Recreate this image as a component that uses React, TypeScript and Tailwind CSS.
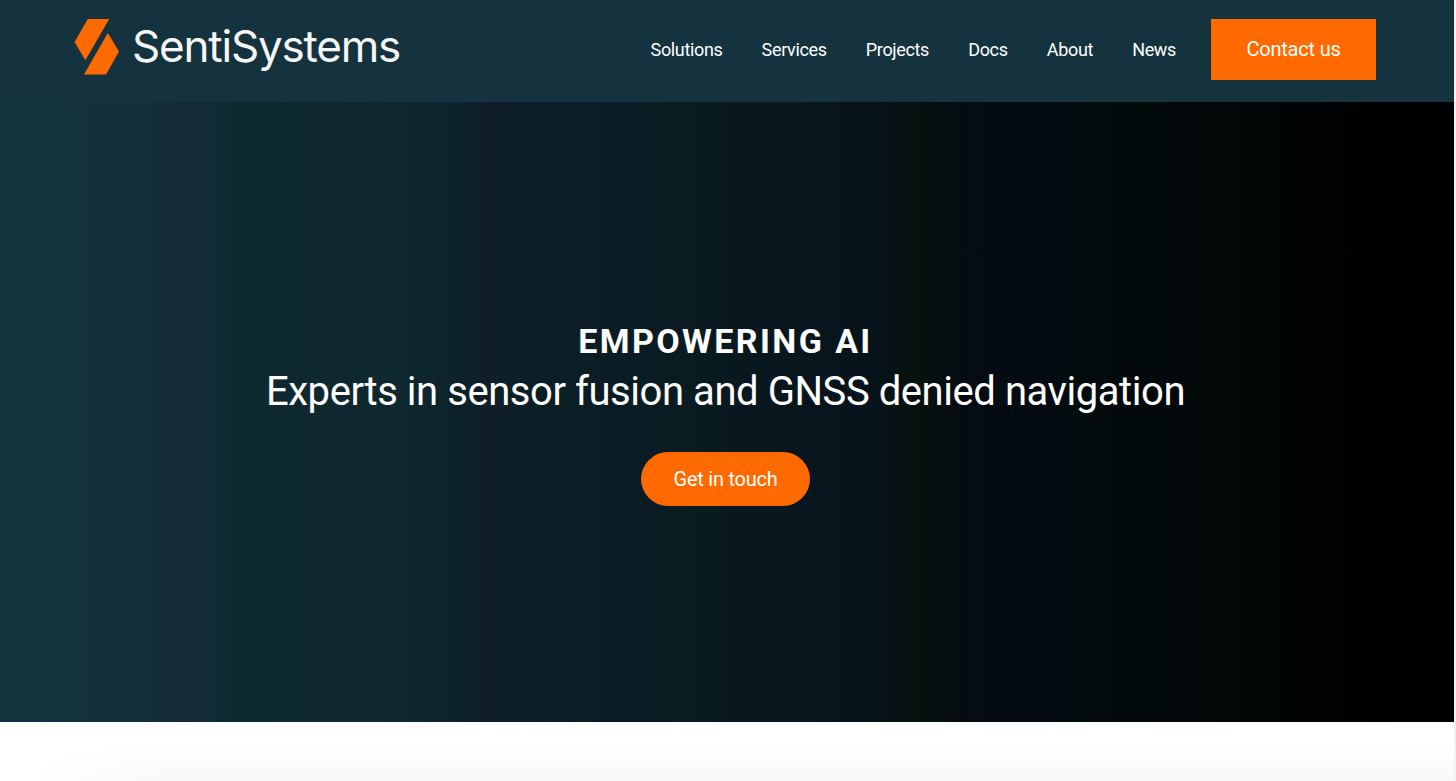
import React from 'react';

const links = ['Solutions', 'Services', 'Projects', 'Docs', 'About', 'News'];

const Logo: React.FC = () => (
    <a href="#" className="flex items-start">
        <svg width="46" height="56" viewBox="0 0 46 56" fill="#ff6a00">
            <polygon points="13.8,0 35.2,0 11.4,41.2 0.5,23" />
            <polygon points="33.8,14 45,32.6 32,55.4 10,55.4" />
        </svg>
        <span className="ml-3 -mt-px font-['Inter',sans-serif] text-[44px] leading-[56px] tracking-[-1.2px] text-[#f5f5f5]">
            SentiSystems
        </span>
    </a>
);

const App: React.FC = () => {
    return (
        <div className="h-[781px] overflow-hidden bg-[#f1f2f2] pr-0.5 font-['Roboto',sans-serif] text-white">
            <header className="flex h-[101.5px] items-start justify-between bg-[#14333e] pl-[74px] pr-[78px] pt-[19px]">
                <Logo />
                <div className="flex items-start">
                    <nav className="flex gap-[39.2px] pr-[35px] text-[18px] leading-[62px] tracking-[-0.35px]">
                        {links.map((link) => (
                            <a key={link} href="#">{link}</a>
                        ))}
                    </nav>
                    <a href="#" className="flex h-[60.5px] w-[165px] items-center justify-center bg-[#ff6a00] text-[20px] tracking-[-0.2px]">
                        Contact us
                    </a>
                </div>
            </header>

            <section className="flex h-[620.5px] flex-col items-center bg-[linear-gradient(90deg,#12333e_0%,#13313b_10%,#152d38_10.3%,#142b36_14.5%,#0f2b33_15%,#0d2a30_17%,#0d292f_20%,#10282f_21%,#0e262d_29%,#0b2228_32%,#101f28_32.6%,#0f1f27_36%,#0b1f26_37%,#0a1b22_47%,#09171e_53%,#06131a_60%,#07120f_63%,#050c11_66%,#040b13_68%,#040b13_72%,#030c0e_73%,#020809_82%,#010304_90%,#000_96%)] pr-[3px] pt-[219px]">
                <h1 className="text-[34px] font-bold leading-[40px] tracking-[2.4px]">EMPOWERING AI</h1>
                <p className="mt-1.5 text-[40px] leading-[50px] tracking-[-0.44px]">Experts in sensor fusion and GNSS denied navigation</p>
                <a href="#" className="mt-[35px] flex h-[54px] w-[169px] items-center justify-center rounded-full bg-[#ff6a00] text-[20px] tracking-[-0.25px]">
                    Get in touch
                </a>
            </section>

            <section className="h-[59px] bg-white">
                <div className="h-full bg-linear-to-b from-white from-40% to-[#f8f8f8] mask-[linear-gradient(90deg,transparent_2%,#000_12%)]" />
            </section>
        </div>
    );
};

export default App;
